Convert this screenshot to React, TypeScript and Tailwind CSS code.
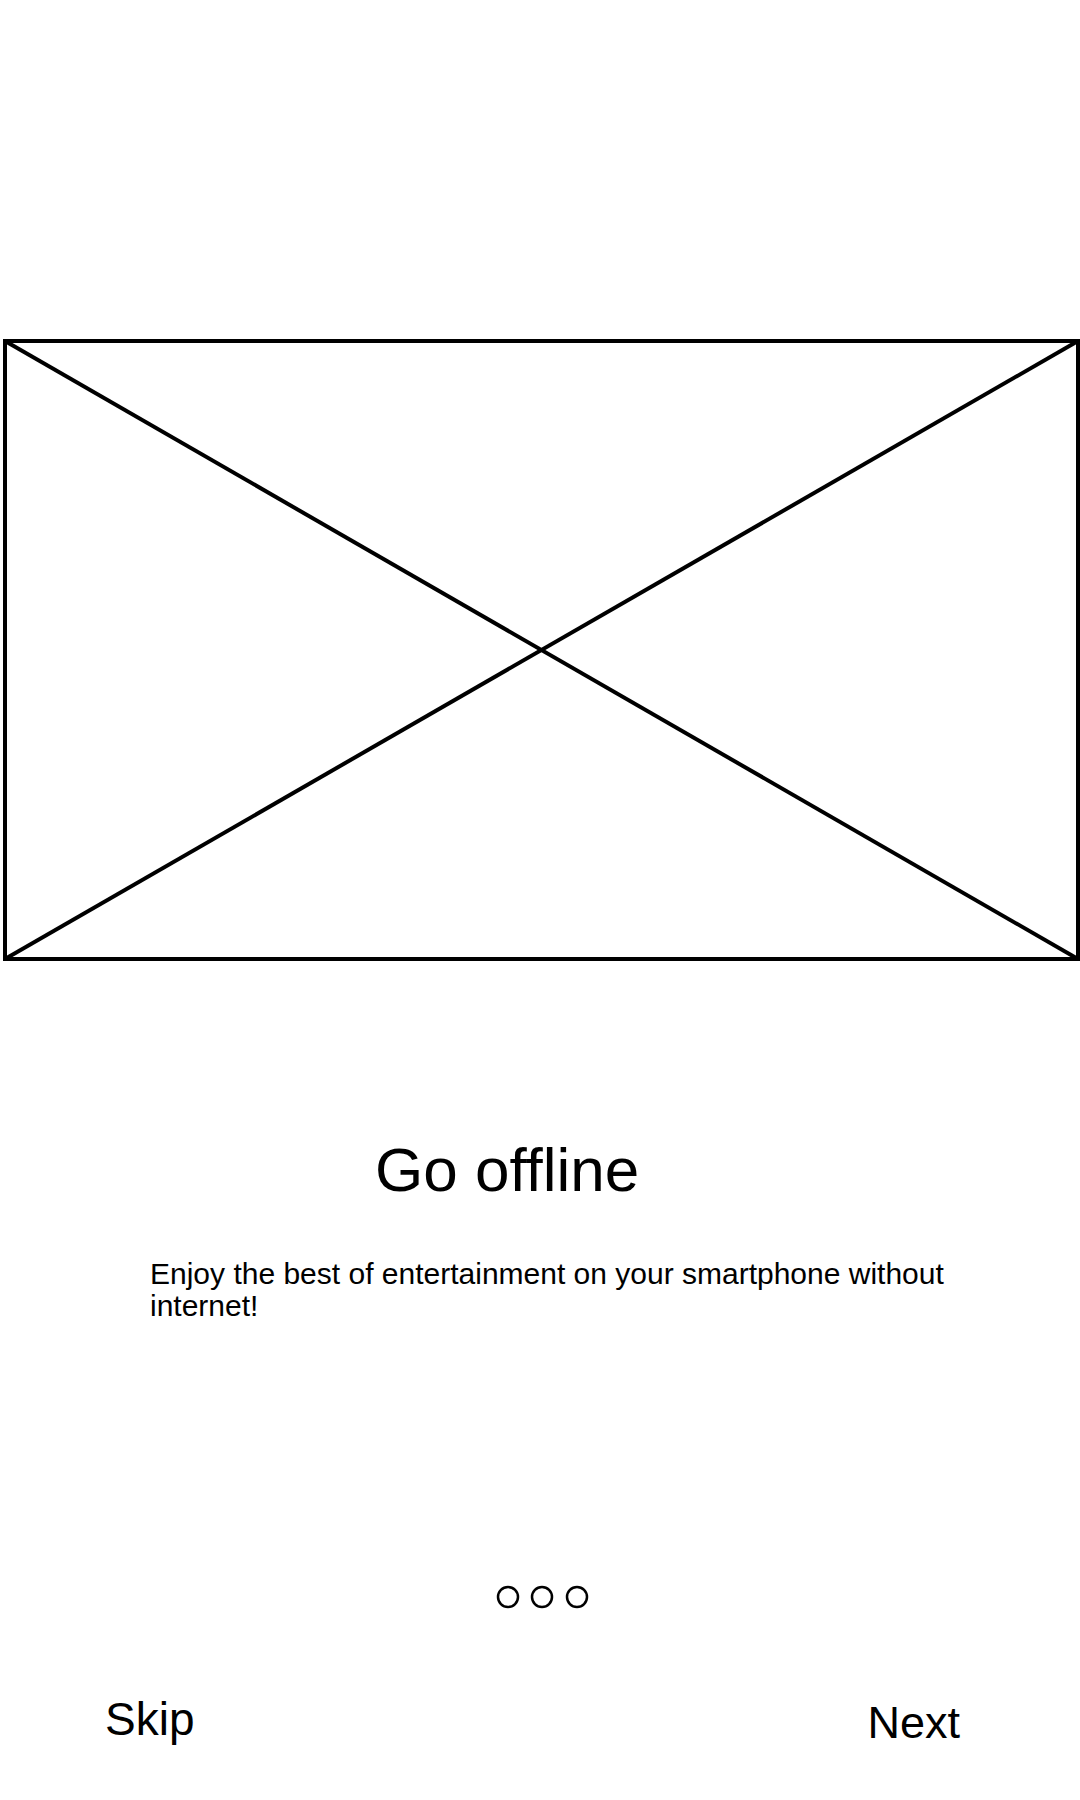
export default function App() {
  return (
    <div className="w-[1080px] h-[1800px] bg-white text-black font-['Liberation_Sans',Arial,sans-serif] flex flex-col">
      {/* placeholder image */}
      <div className="mt-[339px] ml-[3px] w-[1077px] h-[622px]">
        <svg width="1077" height="622" viewBox="0 0 1077 622">
          <rect x="2" y="2" width="1073" height="618" fill="none" stroke="#000" strokeWidth="4" />
          <line x1="2" y1="2" x2="1075" y2="620" stroke="#000" strokeWidth="4" />
          <line x1="1075" y1="2" x2="2" y2="620" stroke="#000" strokeWidth="4" />
        </svg>
      </div>

      <h1 className="mt-[178px] pl-[375px] text-[62px] leading-[62px] font-normal">Go offline</h1>

      <p className="mt-[57px] ml-[150px] w-[830px] text-[30px] leading-[32px]">
        Enjoy the best of entertainment on your smartphone without internet!
      </p>

      {/* pager dots */}
      <div className="mt-[263px] ml-[496px]">
        <svg width="94" height="24" viewBox="0 0 94 24">
          <circle cx="12" cy="12" r="10" fill="none" stroke="#000" strokeWidth="2.5" />
          <circle cx="46" cy="12" r="10" fill="none" stroke="#000" strokeWidth="2.5" />
          <circle cx="81" cy="12" r="10" fill="none" stroke="#000" strokeWidth="2.5" />
        </svg>
      </div>

      <div className="mt-[87px] flex justify-between items-start pl-[105px] pr-[120px]">
        <button className="text-[46px] leading-[46px]">Skip</button>
        <button className="mt-[4px] text-[45px] leading-[46px]">Next</button>
      </div>
    </div>
  );
}
